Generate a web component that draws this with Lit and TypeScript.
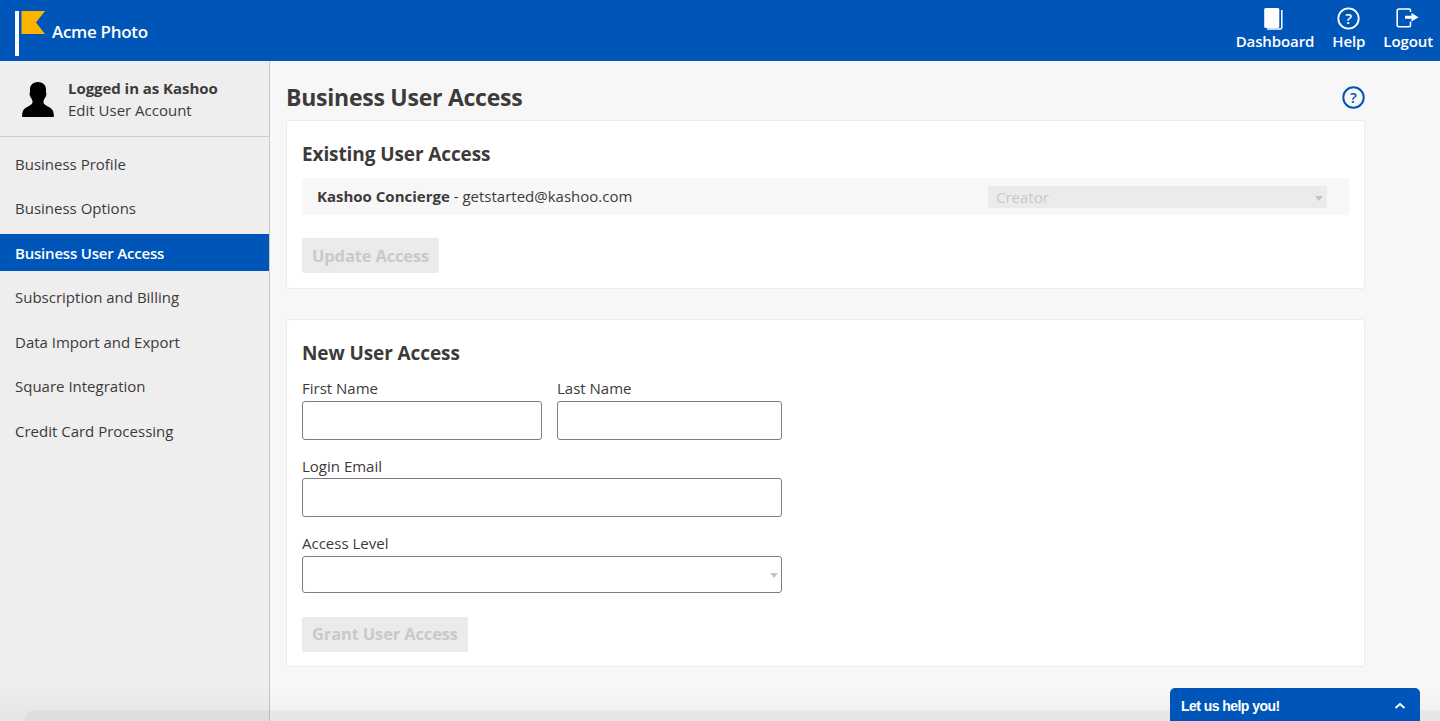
import { LitElement, html, css } from "lit";
import { customElement } from "lit/decorators.js";

const NAV = ["Business Profile", "Business Options", "Business User Access", "Subscription and Billing", "Data Import and Export", "Square Integration", "Credit Card Processing"];

@customElement("app-root")
export class AppRoot extends LitElement {
  static styles = css`
    :host { display: block; height: 721px; overflow: hidden; position: relative; font-family: "Open Sans", sans-serif; color: #3d3a3a; background: #f7f7f7; }
    .top { height: 61px; background: #0055b8; display: flex; justify-content: space-between; color: #fff; }
    .brand { display: flex; align-items: flex-start; padding: 11px 0 0 15px; gap: 6px; }
    .brand svg { display: block; }
    .brand span { font-size: 17px; line-height: 23px; margin-top: 9px; font-weight: 600; letter-spacing: -0.3px; }
    .tools { display: flex; padding: 7px 7px 0 0; gap: 19px; }
    .tool { display: flex; flex-direction: column; align-items: center; font-size: 15px; line-height: 20px; font-weight: 600; gap: 1px; letter-spacing: -0.1px; }
    .tool svg { display: block; height: 23px; }
    .tool.help { margin-right: -1px; }
    .tool.dash { margin-right: -1px; }
    .tool.dash svg { margin-right: 2px; }
    .body { display: flex; height: 660px; }
    .side { width: 269px; flex: none; background: #eeeeee; border-right: 1px solid #c8c8c8; }
    .user { height: 75px; border-bottom: 1px solid #cfcfcf; display: flex; align-items: center; padding-left: 22px; gap: 14px; font-size: 15px; line-height: 22px; }
    .user svg { display: block; margin-top: 2px; }
    .user b { display: block; font-weight: 700; letter-spacing: -0.05px; }
    .nav { display: flex; flex-direction: column; padding-top: 7.6px; }
    .nav a { height: 37px; line-height: 38px; padding-left: 15px; font-size: 15px; margin-bottom: 7.5px; letter-spacing: 0; }
    .nav a.on { background: #0055b8; color: #fff; font-weight: 600; letter-spacing: -0.2px; }
    .main { width: 1079px; margin-left: 16px; flex: none; }
    .head { display: flex; justify-content: space-between; align-items: center; height: 59px; }
    h1 { margin: 0; font-size: 23px; font-weight: 700; letter-spacing: -0.25px; line-height: 32px; margin-top: 12px; }
    .head svg { display: block; margin-top: 13px; }
    .card { background: #fff; border: 1px solid #ececec; border-radius: 3px; padding: 0 15px; box-sizing: border-box; }
    .c1 { height: 169px; margin-bottom: 30px; }
    .c2 { height: 348px; }
    h2 { margin: 0; font-size: 19px; line-height: 26px; font-weight: 700; letter-spacing: -0.1px; padding-top: 20px; }
    .row { margin-top: 11px; height: 37px; background: #f7f7f7; display: flex; align-items: center; justify-content: space-between; padding: 0 22px 0 15px; font-size: 15px; }
    .row > div:first-child { margin-top: -2px; }
    .row b { font-weight: 700; }
    .dis { width: 339px; height: 22px; background: #ebebeb; border-radius: 2px; color: #c9c9c9; display: flex; align-items: center; justify-content: space-between; padding: 0 4px 0 8px; box-sizing: border-box; margin-top: 1px; }
    .btn { display: block; background: #ebebeb; color: #c9c9c9; border-radius: 2px; font-size: 16.5px; font-weight: 700; height: 35px; line-height: 35px; padding: 0 10px; width: fit-content; letter-spacing: -0.15px; }
    .c1 .btn { margin-top: 23px; }
    .fields { display: grid; grid-template-columns: 240px 225px; column-gap: 15px; margin-top: 11.4px; width: 480px; }
    label { display: block; font-size: 15px; line-height: 22px; height: 23.5px; }
    .input { height: 39px; border: 1px solid #7d7d7d; border-radius: 3px; box-sizing: border-box; background: #fff; margin-bottom: 15px; }
    .wide { grid-column: 1 / 3; }
    .sel { height: 37px; margin-bottom: 0; display: flex; align-items: center; justify-content: flex-end; padding-right: 3px; }
    .arrow { width: 0; height: 0; border-left: 4.5px solid transparent; border-right: 4.5px solid transparent; border-top: 5px solid #c4c4c4; margin-top: 2px; }
    .c2 .btn { margin-top: 24px; line-height: 33px; }
    .chat { position: absolute; right: 20px; bottom: 0; width: 250px; height: 33px; background: #0055b8; border-radius: 5px 5px 0 0; color: #fff; font-family: "Liberation Sans", sans-serif; font-weight: 700; font-size: 14px; display: flex; align-items: center; justify-content: space-between; padding: 2px 14px 0 11px; box-sizing: border-box; letter-spacing: -0.55px; z-index: 2; }
    .fade { position: absolute; left: 0; right: 0; bottom: 0; height: 34px; background: linear-gradient(rgba(0,0,0,0), rgba(0,0,0,0.035)); pointer-events: none; }
    .fade2 { position: absolute; left: 25px; right: 0; bottom: 0; height: 11px; background: rgba(0,0,0,0.035); border-radius: 14px 0 0 0; pointer-events: none; }
  `;

  render() {
    return html`
      <div class="top">
        <div class="brand">
          <svg width="31" height="45" viewBox="0 0 31 45"><rect x="0" y="0" width="4" height="45" fill="#fff"/><path d="M6.5 0H30L21 11.5L30 23H6.5Z" fill="#fdb400"/></svg>
          <span>Acme Photo</span>
        </div>
        <div class="tools">
          <div class="tool dash">
            <svg width="20" height="23" viewBox="0 0 20 23"><path d="M0.2 2.5Q0.2 1 1.7 1H14Q15.3 1 15.3 2.5V19.5Q15.3 21 14 21H1.7Q0.2 21 0.2 19.5Z" fill="#fff"/><path d="M17.8 3V20.5Q17.8 22 16 22H3" fill="none" stroke="#fff" stroke-width="1.5"/></svg>
            Dashboard
          </div>
          <div class="tool help">
            <svg width="23" height="23" viewBox="0 0 23 23"><circle cx="11.5" cy="11.5" r="10.2" fill="none" stroke="#fff" stroke-width="1.8"/><text x="11.5" y="17" text-anchor="middle" fill="#fff" font-size="15" font-weight="600" font-family="Open Sans">?</text></svg>
            Help
          </div>
          <div class="tool">
            <svg width="24" height="23" viewBox="0 0 24 23"><path d="M14.5 5V3.5Q14.5 2 13 2H3Q1.2 2 1.2 4V18Q1.2 19.7 3 19.7H13Q14.5 19.7 14.5 18V14.5" fill="none" stroke="#fff" stroke-width="1.6"/><path d="M9 8.8H15.5V6L22.5 10.3L15.5 14.6V11.8H9Z" fill="#fff"/></svg>
            Logout
          </div>
        </div>
      </div>
      <div class="body">
        <div class="side">
          <div class="user">
            <svg width="32" height="36" viewBox="0 0 32 36"><path d="M16 0C21.5 0 24.5 3.5 24 9C23.8 11 25 11.5 24 14C23.5 15.5 22 16.5 21.5 19C21.2 21 22 22.5 25 24C29 26 31.5 27 32 34Q32 35 31 35H1Q0 35 0 34C0.5 27 3 26 7 24C10 22.5 10.8 21 10.5 19C10 16.5 8.5 15.5 8 14C7 11.5 8.2 11 8 9C7.5 3.5 10.5 0 16 0Z" fill="#000"/></svg>
            <div><b>Logged in as Kashoo</b>Edit User Account</div>
          </div>
          <div class="nav">
            ${NAV.map((n) => html`<a class=${n === "Business User Access" ? "on" : ""}>${n}</a>`)}
          </div>
        </div>
        <div class="main">
          <div class="head">
            <h1>Business User Access</h1>
            <svg width="23" height="23" viewBox="0 0 23 23"><circle cx="11.5" cy="11.5" r="10.2" fill="none" stroke="#0055b8" stroke-width="2"/><text x="11.5" y="17" text-anchor="middle" fill="#0055b8" font-size="15" font-weight="600" font-family="Open Sans">?</text></svg>
          </div>
          <div class="card c1">
            <h2>Existing User Access</h2>
            <div class="row">
              <div><b>Kashoo Concierge</b> - getstarted@kashoo.com</div>
              <div class="dis">Creator<span class="arrow"></span></div>
            </div>
            <span class="btn">Update Access</span>
          </div>
          <div class="card c2">
            <h2>New User Access</h2>
            <div class="fields">
              <div><label>First Name</label><div class="input"></div></div>
              <div><label>Last Name</label><div class="input"></div></div>
              <div class="wide"><label>Login Email</label><div class="input"></div></div>
              <div class="wide"><label>Access Level</label><div class="input sel"><span class="arrow"></span></div></div>
            </div>
            <span class="btn">Grant User Access</span>
          </div>
        </div>
      </div>
      <div class="fade"></div>
      <div class="fade2"></div>
      <div class="chat">Let us help you!
        <svg width="12" height="8" viewBox="0 0 12 8"><path d="M1.5 6L6 2L10.5 6" fill="none" stroke="#fff" stroke-width="2"/></svg>
      </div>
    `;
  }
}
